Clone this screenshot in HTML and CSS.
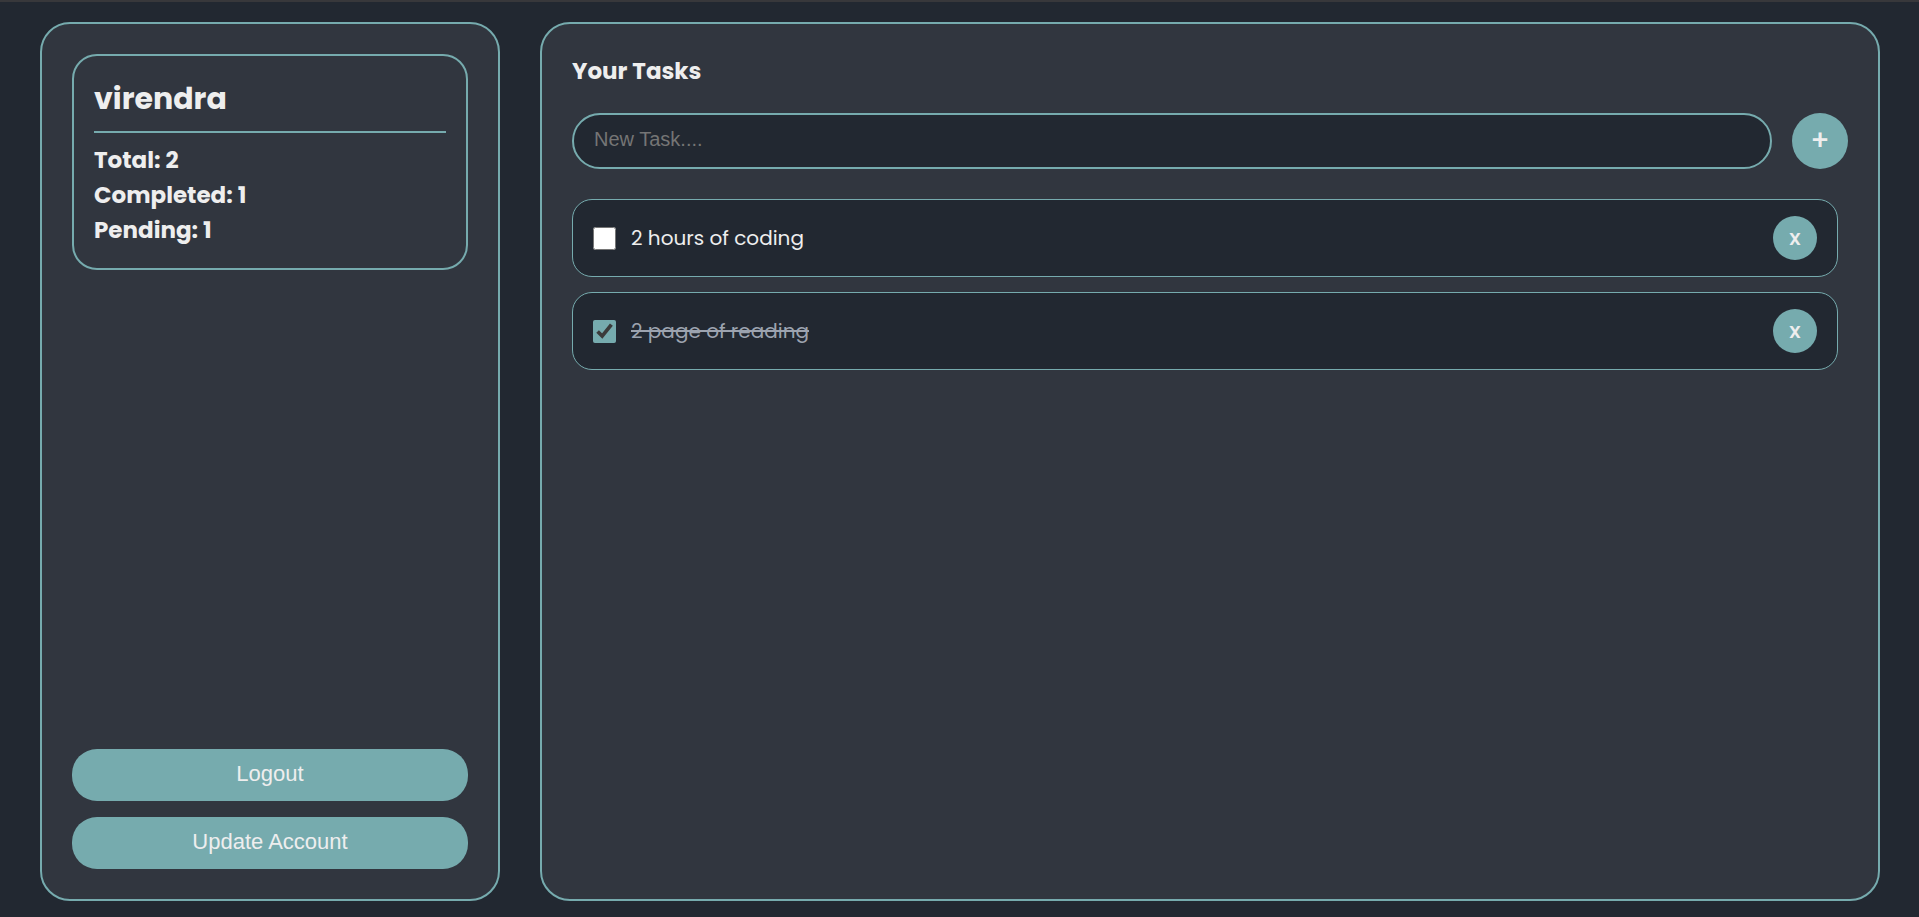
FILE: index.html
```html
<!DOCTYPE html>
<html lang="en">
<head>
<meta charset="utf-8">
<title>Your Tasks</title>
<link rel="stylesheet" href="styles.css">
</head>
<body>
<aside class="panel sidebar">
  <section class="profile">
    <h2 class="profile-name">virendra</h2>
    <h3 class="stat">Total: 2</h3>
    <h3 class="stat">Completed: 1</h3>
    <h3 class="stat">Pending: 1</h3>
  </section>
  <div class="account-actions">
    <button class="account-button" type="button">Logout</button>
    <button class="account-button" type="button">Update Account</button>
  </div>
</aside>
<main class="panel board">
  <h3 class="board-title">Your Tasks</h3>
  <form class="new-task">
    <input class="new-task-input" type="text" placeholder="New Task...." aria-label="New Task">
    <button class="add-button" type="button" aria-label="Add task">+</button>
  </form>
  <ul class="task-list">
    <li class="task">
      <input class="task-check" type="checkbox" id="task-1">
      <label class="task-label" for="task-1">2 hours of coding</label>
      <button class="delete-button" type="button" aria-label="Delete task">X</button>
    </li>
    <li class="task">
      <input class="task-check" type="checkbox" id="task-2" checked>
      <label class="task-label" for="task-2">2 page of reading</label>
      <button class="delete-button" type="button" aria-label="Delete task">X</button>
    </li>
  </ul>
</main>
</body>
</html>
```

FILE: styles.css
```css
:root {
  --bg: #222831;
  --surface: #31363f;
  --accent: #76abae;
  --text: #eeeeee;
  --heading-font: Poppins, Inter, sans-serif;
  --control-font: Arial, "Liberation Sans", sans-serif;
}

* {
  box-sizing: border-box;
  margin: 0;
  padding: 0;
}

body {
  display: flex;
  gap: 40px;
  min-height: 100vh;
  padding: 20px 39px 16px 40px;
  border-top: 2px solid #38383b;
  background: var(--bg);
  color: var(--text);
  font-family: var(--heading-font);
  font-size: 20px;
}

button {
  border: 0;
  background: var(--accent);
  color: var(--text);
  cursor: pointer;
}

.panel {
  display: flex;
  flex-direction: column;
  padding: 30px;
  border: 2px solid var(--accent);
  border-radius: 30px;
  background: var(--surface);
}

.sidebar {
  flex: 0 0 25%;
  justify-content: space-between;
}

.board {
  flex: 1;
}

.profile {
  padding: 20px;
  border: 2px solid var(--accent);
  border-radius: 25px;
}

.profile-name {
  margin-bottom: 10px;
  padding-bottom: 10px;
  border-bottom: 2px solid var(--accent);
  font-size: 30px;
  line-height: 45px;
}

.stat,
.board-title {
  font-size: 23px;
  line-height: 35px;
}

.account-actions {
  display: flex;
  flex-direction: column;
  gap: 16px;
}

.account-button {
  padding: 13px 20px 15px;
  border-radius: 25px;
  font-family: var(--control-font);
  font-size: 22px;
  line-height: 24px;
}

.new-task {
  display: flex;
  gap: 20px;
  margin: 24px 0 30px;
}

.new-task-input {
  flex: 1;
  min-width: 0;
  height: 56px;
  padding: 0 20px 4px;
  border: 2px solid var(--accent);
  border-radius: 28px;
  background: var(--bg);
  color: var(--text);
  font-family: var(--control-font);
  font-size: 20px;
}

.new-task-input::placeholder {
  color: #757575;
}

.add-button {
  width: 56px;
  height: 56px;
  border-radius: 50%;
  font-family: var(--heading-font);
  font-size: 28px;
  font-weight: 500;
}

.task-list {
  display: flex;
  flex-direction: column;
  gap: 15px;
  margin-right: 10px;
  list-style: none;
}

.task {
  display: flex;
  align-items: center;
  gap: 15px;
  padding: 16px 20px;
  border: 1px solid var(--accent);
  border-radius: 20px;
  background: var(--bg);
}

.task-check {
  width: 23px;
  height: 23px;
  accent-color: var(--accent);
}

.task-label {
  flex: 1;
  font-size: 20px;
  line-height: 30px;
}

.task-check:checked + .task-label {
  color: #9ca3af;
  text-decoration: line-through;
}

.delete-button {
  width: 44px;
  height: 44px;
  border-radius: 50%;
  font-family: var(--heading-font);
  font-size: 18px;
  font-weight: 600;
}
```
